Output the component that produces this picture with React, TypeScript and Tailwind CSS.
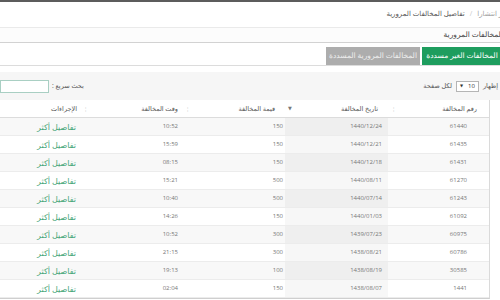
import React from "react";

const rows = [
  ["61440", "1440/12/24", "150", "10:52"],
  ["61435", "1440/12/21", "150", "15:59"],
  ["61431", "1440/12/18", "150", "08:15"],
  ["61270", "1440/08/11", "500", "15:21"],
  ["61243", "1440/07/14", "500", "10:40"],
  ["61092", "1440/01/03", "150", "14:26"],
  ["60975", "1439/07/23", "300", "10:52"],
  ["60786", "1438/08/21", "300", "21:15"],
  ["30585", "1438/08/19", "100", "19:13"],
  ["1441", "1438/08/07", "150", "02:04"],
];

const grid = "grid grid-cols-[101px_103px_103px_102px_80px]";

function SortIcon({ active }: { active?: boolean }) {
  return (
    <span
      className={
        active
          ? "absolute left-[3px] top-1/2 -translate-y-1/2 text-[5px] text-[#777]"
          : "absolute left-[4px] top-1/2 -translate-y-1/2 text-[6px] text-[#d0d0d0]"
      }
    >
      {active ? "▼" : "¦"}
    </span>
  );
}

function HeaderRow() {
  return (
    <div className={`${grid} h-[18px] border-b border-[#dcdcdc] bg-white text-[6.5px] text-[#555]`}>
      <div className="relative flex items-center pr-[12px]">
        رقم المخالفة
        <SortIcon />
      </div>
      <div className="relative flex items-center pr-[10px]">
        تاريخ المخالفة
        <SortIcon active />
      </div>
      <div className="relative flex items-center pr-[10px]">
        قيمة المخالفة
        <SortIcon />
      </div>
      <div className="relative flex items-center pr-[4px]">
        وقت المخالفة
        <SortIcon />
      </div>
      <div className="relative flex items-center pr-[3px]">الإجراءات</div>
    </div>
  );
}

function Row({ cells, odd }: { cells: string[]; odd: boolean }) {
  return (
    <div
      className={`${grid} h-[18px] border-b border-[#ececec] text-[6px] text-[#777] ${
        odd ? "bg-[#f8f8f8]" : "bg-white"
      }`}
    >
      <div className="flex items-center pr-[22px]">{cells[0]}</div>
      <div className={`flex items-center pr-[6px] ${odd ? "bg-[#efefef]" : "bg-[#f7f7f7]"}`}>
        {cells[1]}
      </div>
      <div className="flex items-center pr-[2px]">{cells[2]}</div>
      <div className="flex items-center pr-[4px]">{cells[3]}</div>
      <div className="flex items-center pr-[4px] text-[8px] text-[#45a577]">تفاصيل أكثر</div>
    </div>
  );
}

export default function App() {
  return (
    <div
      dir="rtl"
      className="w-[500px] h-[300px] overflow-hidden bg-white font-['Open_Sans','DejaVu_Sans',sans-serif]"
    >
      <div className="h-[2px] bg-[#5c5c5c]" />

      {/* breadcrumb */}
      <div className="h-[25px] flex items-center gap-[5px] mr-[-45px] text-[7px] whitespace-nowrap">
        <span className="text-[#a0a0a0]">المخالفات الأكثر انتشارا</span>
        <span className="text-[#c8c8c8]">/</span>
        <span className="text-[#555]">تفاصيل المخالفات المرورية</span>
      </div>

      {/* title bar */}
      <div className="h-[16px] flex items-center mr-[-3px] border-t border-[#eaeaea] border-b border-b-[#d2d2d2] bg-[#fcfcfc] text-[7.5px] text-[#444]">
        المخالفات المرورية
      </div>

      {/* tabs */}
      <div className="mt-[4px] flex gap-[2px] border-b border-[#dcdcdc] mr-[-2px]">
        <div className="h-[18px] w-[80px] flex items-center justify-center bg-[#1e9d5e] text-[7.5px] text-white">
          المخالفات الغير مسددة
        </div>
        <div className="h-[18px] w-[94px] flex items-center justify-center bg-[#adadad] text-[7.5px] text-[#eeeeee]">
          المخالفات المرورية المسددة
        </div>
      </div>

      {/* controls */}
      <div className="mt-[6px] h-[28px] flex items-center justify-between bg-[#f6f6f6] text-[6.5px] text-[#555]">
        <div className="flex items-center gap-[4px] pr-[2px]">
          <span>إظهار</span>
          <div dir="ltr" className="h-[11px] w-[23px] flex items-center justify-between px-[3px] border border-[#b5b5b5] bg-white text-[6px] text-[#333]">
            <span className="text-[4px]">▼</span>
            <span>10</span>
          </div>
          <span>لكل صفحة</span>
        </div>
        <div className="flex items-center gap-[3px]">
          <span>بحث سريع :</span>
          <div className="h-[13px] w-[49px] border border-[#a9cfc3] bg-white" />
        </div>
      </div>

      {/* table */}
      <div className="w-[490px] mr-[10px] border-r border-[#dadada] border-b border-b-[#cfcfcf]">
        <HeaderRow />
        {rows.map((r, i) => (
          <Row key={i} cells={r} odd={i % 2 === 0} />
        ))}
      </div>
    </div>
  );
}
